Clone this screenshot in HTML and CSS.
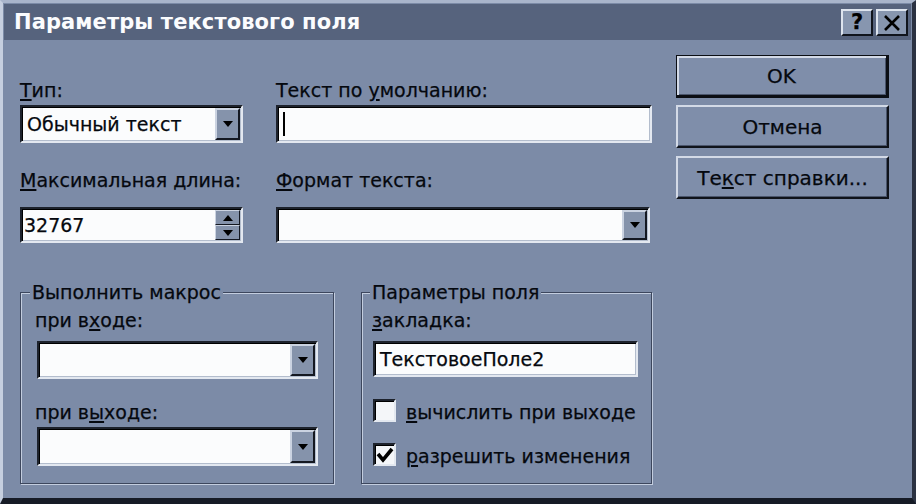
FILE: index.html
```html
<!DOCTYPE html>
<html lang="ru">
<head>
<meta charset="utf-8">
<title>Параметры текстового поля</title>
<link rel="stylesheet" href="styles.css">
</head>
<body>
<div class="window">
  <div class="titlebar">
    <span class="title">Параметры текстового поля</span>
    <div class="tb-buttons">
      <span class="tbtn help">?</span>
      <span class="tbtn close"><svg width="18" height="16" viewBox="0 0 18 16"><path d="M2 1 L16 15 M16 1 L2 15" stroke="#000" stroke-width="2.6" fill="none"/></svg></span>
    </div>
  </div>
  <div class="content">
    <div class="left">
      <div class="row row1">
        <div class="col c1">
          <div class="label"><u>Т</u>ип:</div>
          <div class="field combo h38"><span class="val">Обычный текст</span><span class="drop"><svg width="10" height="6" viewBox="0 0 10 6"><path d="M0 0 H10 L5 6 Z" fill="#000"/></svg></span></div>
        </div>
        <div class="col c2">
          <div class="label">Текст по <u>у</u>молчанию:</div>
          <div class="field h38"><span class="caret"></span></div>
        </div>
      </div>
      <div class="row row2">
        <div class="col c1">
          <div class="label"><u>М</u>аксимальная длина:</div>
          <div class="field combo h36"><span class="val num">32767</span><span class="spin"><span class="sbtn"><svg width="10" height="6" viewBox="0 0 10 6"><path d="M0 6 H10 L5 0 Z" fill="#000"/></svg></span><span class="sbtn"><svg width="10" height="6" viewBox="0 0 10 6"><path d="M0 0 H10 L5 6 Z" fill="#000"/></svg></span></span></div>
        </div>
        <div class="col c2">
          <div class="label"><u>Ф</u>ормат текста:</div>
          <div class="field combo h36 fmt"><span class="val"></span><span class="drop"><svg width="10" height="6" viewBox="0 0 10 6"><path d="M0 0 H10 L5 6 Z" fill="#000"/></svg></span></div>
        </div>
      </div>
      <div class="groups">
        <div class="group g1">
          <span class="legend">Выполнить макрос</span>
          <div class="glabel">при в<u>х</u>оде:</div>
          <div class="field combo gcombo h38"><span class="val"></span><span class="drop"><svg width="10" height="6" viewBox="0 0 10 6"><path d="M0 0 H10 L5 6 Z" fill="#000"/></svg></span></div>
          <div class="glabel second">при в<u>ы</u>ходе:</div>
          <div class="field combo gcombo h39 tight"><span class="val"></span><span class="drop"><svg width="10" height="6" viewBox="0 0 10 6"><path d="M0 0 H10 L5 6 Z" fill="#000"/></svg></span></div>
        </div>
        <div class="group g2">
          <span class="legend">Параметры поля</span>
          <div class="glabel"><u>з</u>акладка:</div>
          <div class="field gtext h36"><span class="val">ТекстовоеПоле2</span></div>
          <div class="check first"><span class="box"></span><span class="ctext"><u>в</u>ычислить при выходе</span></div>
          <div class="check"><span class="box"><svg width="18" height="16" viewBox="0 0 18 16"><path d="M2 7 L7 13 L16 2" stroke="#000" stroke-width="3.6" fill="none"/></svg></span><span class="ctext"><u>р</u>азрешить изменения</span></div>
        </div>
      </div>
    </div>
    <div class="buttons">
      <div class="btn default"><span>OK</span></div>
      <div class="btn"><span>Отмена</span></div>
      <div class="btn"><span>Те<u>к</u>ст справки...</span></div>
    </div>
  </div>
</div>
</body>
</html>
```
FILE: styles.css
```css
html, body {
  margin: 0;
  padding: 0;
  background: #6e7c96;
}
body {
  font-family: "DejaVu Sans", "Liberation Sans", sans-serif;
  font-size: 19px;
  color: #05080e;
  -webkit-text-stroke: 0.25px #05080e;
}
u {
  text-decoration: underline;
  text-underline-offset: 2px;
  text-decoration-thickness: 2px;
}
.window {
  width: 916px;
  height: 504px;
  box-sizing: border-box;
  background: #7c8ba7;
  border-style: solid;
  border-width: 3px 4px 6px 3px;
  border-color: #a9b5cb #2b3242 #161b26 #c6cfdf;
  padding: 1px;
  display: flex;
  flex-direction: column;
}
.titlebar {
  height: 36px;
  flex: none;
  background: #56637d;
  display: flex;
  align-items: center;
  justify-content: space-between;
  padding: 0 3px 0 10px;
}
.title {
  color: #fbfcfe;
  -webkit-text-stroke: 0;
  font-weight: bold;
  font-size: 21px;
  letter-spacing: 0.1px;
}
.tb-buttons {
  display: flex;
  gap: 3px;
  margin-top: 1px;
}
.tbtn {
  width: 32px;
  height: 27px;
  box-sizing: border-box;
  background: #8796af;
  border: 2px solid;
  border-color: #dde4ee #10141c #10141c #dde4ee;
  display: flex;
  align-items: center;
  justify-content: center;
  font-weight: bold;
  font-size: 21px;
  line-height: 1;
  color: #000;
}
.content {
  flex: 1;
  display: flex;
  padding: 15px 0 0 16px;
}
.left {
  width: 632px;
  padding-top: 24px;
}
.row {
  display: flex;
  gap: 33px;
}
.col {
  display: flex;
  flex-direction: column;
}
.c1 { width: 223px; }
.c2 { width: 376px; }
.label, .glabel {
  height: 22px;
  line-height: 22px;
  white-space: nowrap;
}
.row1 .label { margin-bottom: 4px; }
.row2 { margin-top: 26px; }
.row2 .label { margin-bottom: 16px; }
.fmt { width: 374px; }

.field {
  box-sizing: border-box;
  background: #fbfcfd;
  border: 2px solid;
  border-color: #1d222c #e3e8f0 #e3e8f0 #1d222c;
  box-shadow: inset 1px 1px 0 #000, inset -1px -1px 0 #b3bdcd;
  display: flex;
  align-items: center;
}
.h36 { height: 36px; }
.h38 { height: 38px; }
.h39 { height: 39px; }
.val {
  flex: 1;
  padding-left: 5px;
  white-space: nowrap;
  line-height: 22px;
}
.num { padding-left: 2px; }
.caret {
  width: 2px;
  height: 24px;
  background: #000;
  margin-left: 5px;
}
.drop {
  width: 25px;
  align-self: stretch;
  margin: 1px 1px 1px 0;
  box-sizing: border-box;
  background: #8593ab;
  border: 2px solid;
  border-color: #cbd3e1 #141821 #141821 #cbd3e1;
  display: flex;
  align-items: center;
  justify-content: center;
}
.spin {
  width: 25px;
  align-self: stretch;
  margin: 1px 1px 1px 0;
  display: flex;
  flex-direction: column;
}
.sbtn {
  flex: 1;
  box-sizing: border-box;
  background: #8593ab;
  border: 1px solid;
  border-color: #cbd3e1 #141821 #141821 #cbd3e1;
  display: flex;
  align-items: center;
  justify-content: center;
}

.groups {
  display: flex;
  gap: 27px;
  margin-top: 49px;
}
.group {
  box-sizing: border-box;
  height: 192px;
  border: 1px solid #3c465d;
  box-shadow: 1px 1px 0 #c3cddf, inset 1px 1px 0 #c3cddf;
  display: flex;
  flex-direction: column;
  align-items: flex-start;
}
.g1 { width: 314px; padding: 0 15px 0 14px; }
.g2 { width: 291px; padding: 0 13px 0 10px; }
.legend {
  height: 22px;
  line-height: 22px;
  margin: -12px 0 6px -5px;
  padding: 0 2px;
  background: #7c8ba7;
  white-space: nowrap;
}
.g2 .legend { margin-left: -2px; }
.glabel { margin-bottom: 10px; }
.glabel.second { margin-top: 22px; margin-bottom: 4px; }
.gcombo {
  width: 281px;
  margin-left: 2px;
}
.gtext {
  width: 265px;
  margin-left: 1px;
}
.check {
  display: flex;
  align-items: flex-start;
  gap: 10px;
  margin-left: 1px;
  height: 23px;
  margin-top: 21px;
}
.check.first { margin-top: 22px; }
.box {
  width: 23px;
  height: 23px;
  box-sizing: border-box;
  background: #f4f6f9;
  border: 2px solid;
  border-color: #1d222c #e3e8f0 #e3e8f0 #1d222c;
  box-shadow: inset 1px 1px 0 #000;
  display: flex;
  align-items: center;
  justify-content: center;
}
.ctext {
  line-height: 22px;
  margin-top: 2px;
  white-space: nowrap;
}

.buttons {
  margin-left: 24px;
  width: 213px;
  display: flex;
  flex-direction: column;
  gap: 7px;
}
.btn {
  height: 43px;
  box-sizing: border-box;
  background: #7f8eaa;
  border: 2px solid;
  border-color: #d3dae7 #0f131b #0f131b #d3dae7;
  box-shadow: inset -1px -1px 0 #4a556c;
  display: flex;
  align-items: center;
  justify-content: center;
  white-space: nowrap;
  font-size: 20px;
}
.btn + .btn + .btn { margin-top: 1px; }
.btn.default {
  border: 3px solid #0b0e14;
  border-top-width: 1px;
  border-left-width: 1px;
  box-shadow: inset 2px 2px 0 #d3dae7, inset -1px -1px 0 #4a556c;
}
```
